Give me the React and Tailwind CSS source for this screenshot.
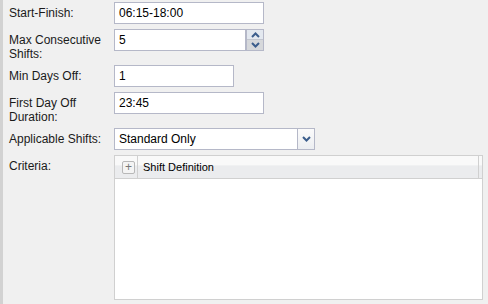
import React from "react";

const font = { fontFamily: '"Liberation Sans", Arial, sans-serif' };

function ChevUp() {
  return (
    <svg width="9" height="6" viewBox="0 0 9 6">
      <path d="M1 5 L4.5 1.5 L8 5" fill="none" stroke="#3b5d8c" strokeWidth="2" />
    </svg>
  );
}
function ChevDown() {
  return (
    <svg width="9" height="6" viewBox="0 0 9 6">
      <path d="M1 1 L4.5 4.5 L8 1" fill="none" stroke="#3b5d8c" strokeWidth="2" />
    </svg>
  );
}

function Label({ children }) {
  return (
    <div className="w-[105px] shrink-0 pt-[4px] text-[12px] leading-[14px] text-[#1a1a1a]">
      {children}
    </div>
  );
}

function Input({ value, w }) {
  return (
    <div
      className={`${w} h-[22px] border border-[#b5b8c8] bg-white pl-[4px] text-[12px] leading-[20px] text-black`}
    >
      {value}
    </div>
  );
}

export default function App() {
  return (
    <div className="flex h-[304px] w-[488px] bg-[#f0f0f0]" style={font}>
      <div className="w-[3px] shrink-0 bg-[#d2d2d2]" />
      <div className="flex flex-1 flex-col pl-[6px]">
        <div className="mt-[2px] flex">
          <Label>Start-Finish:</Label>
          <Input value="06:15-18:00" w="w-[150px]" />
        </div>
        <div className="mt-[5px] flex">
          <Label>
            Max Consecutive
            <br />
            Shifts:
          </Label>
          <div className="flex">
            <Input value="5" w="w-[132px]" />
            <div className="flex h-[22px] w-[18px] flex-col border border-[#b5b8c8]">
              <div className="flex h-[10px] items-center justify-center bg-[#e3e8ef] border-b border-[#c2c6cf]">
                <ChevUp />
              </div>
              <div className="flex flex-1 items-center justify-center bg-[#d6d8db]">
                <ChevDown />
              </div>
            </div>
          </div>
        </div>
        <div className="mt-[4px] flex">
          <Label>Min Days Off:</Label>
          <Input value="1" w="w-[120px]" />
        </div>
        <div className="mt-[5px] flex">
          <Label>
            First Day Off
            <br />
            Duration:
          </Label>
          <Input value="23:45" w="w-[150px]" />
        </div>
        <div className="mt-[4px] flex">
          <Label>Applicable Shifts:</Label>
          <div className="flex">
            <Input value="Standard Only" w="w-[184px]" />
            <div className="flex h-[22px] w-[17px] items-center justify-center border border-l-0 border-[#b5b8c8] bg-gradient-to-b from-[#fbfbfb] to-[#eceef1]">
              <ChevDown />
            </div>
          </div>
        </div>
        <div className="mt-[5px] flex">
          <Label>Criteria:</Label>
          <div className="flex h-[145px] w-[369px] flex-col border border-[#d0d0d0] bg-white">
            <div className="flex h-[23px] shrink-0 border-b border-[#d0d0d0] bg-[linear-gradient(#f9f9f9_0%,#f9f9f9_40%,#ebecee_45%,#ebecee_100%)]">
              <div className="flex w-[23px] items-center border-r border-[#d0d0d0] pl-[7px]">
                <div className="flex h-[13px] w-[13px] items-center justify-center rounded-[2px] border border-[#b8b8b8] bg-[#f4f4f4] text-[12px] leading-none text-[#777]">
                  +
                </div>
              </div>
              <div className="flex flex-1 items-center pl-[5px] text-[11px] text-black">
                Shift Definition
              </div>
              <div className="w-[4px] border-l border-[#d0d0d0]" />
            </div>
            <div className="flex-1" />
          </div>
        </div>
      </div>
    </div>
  );
}
